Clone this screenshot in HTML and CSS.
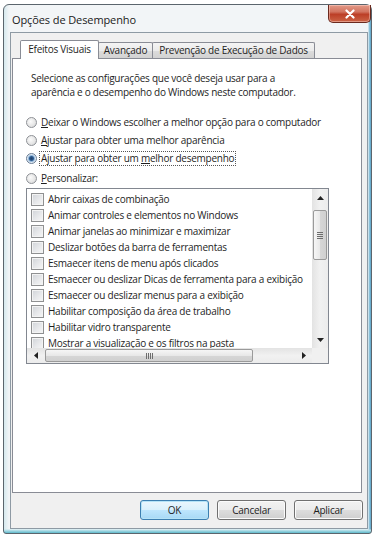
FILE: index.html
```html
<!DOCTYPE html>
<html lang="pt-BR">
<head>
<meta charset="utf-8">
<title>Opções de Desempenho</title>
<link rel="stylesheet" href="styles.css">
</head>
<body>
<div class="window">
  <div class="titlebar">
    <span class="title">Opções de Desempenho</span>
    <button class="close" aria-label="Fechar"><svg width="12" height="10" viewBox="0 0 12 10"><path d="M2.5 1.5 L9.5 8.5 M9.5 1.5 L2.5 8.5" stroke="#fff" stroke-width="2.2" stroke-linecap="round"/></svg></button>
  </div>
  <div class="client">
    <div class="tabs">
      <div class="tab tab-active tab-w1">Efeitos Visuais</div>
      <div class="tab tab-w2">Avançado</div>
      <div class="tab tab-w3">Prevenção de Execução de Dados</div>
    </div>
    <div class="panel">
      <p class="desc">Selecione as configurações que você deseja usar para a<br>aparência e o desempenho do Windows neste computador.</p>
      <div class="radios">
        <div class="radio"><span class="rb"></span><span class="lbl"><u>D</u>eixar o Windows escolher a melhor opção para o computador</span></div>
        <div class="radio"><span class="rb"></span><span class="lbl"><u>A</u>justar para obter uma melhor aparência</span></div>
        <div class="radio"><span class="rb rb-on"></span><span class="lbl lbl-focus">Ajustar para obter um <u>m</u>elhor desempenho</span></div>
        <div class="radio radio-last"><span class="rb"></span><span class="lbl"><u>P</u>ersonalizar:</span></div>
      </div>
      <div class="listbox">
        <div class="items">
          <div class="item"><span class="cb"></span>Abrir caixas de combinação</div>
          <div class="item"><span class="cb"></span>Animar controles e elementos no Windows</div>
          <div class="item"><span class="cb"></span>Animar janelas ao minimizar e maximizar</div>
          <div class="item"><span class="cb"></span>Deslizar botões da barra de ferramentas</div>
          <div class="item"><span class="cb"></span>Esmaecer itens de menu após clicados</div>
          <div class="item"><span class="cb"></span>Esmaecer ou deslizar Dicas de ferramenta para a exibição</div>
          <div class="item"><span class="cb"></span>Esmaecer ou deslizar menus para a exibição</div>
          <div class="item"><span class="cb"></span>Habilitar composição da área de trabalho</div>
          <div class="item"><span class="cb"></span>Habilitar vidro transparente</div>
          <div class="item"><span class="cb"></span>Mostrar a visualização e os filtros na pasta</div>
        </div>
        <div class="vscroll">
          <div class="sbtn"><svg width="7" height="4" viewBox="0 0 7 4"><path d="M0 4 L3.5 0 L7 4Z" fill="#222"/></svg></div>
          <div class="vthumb"><span class="grip-v"></span></div>
          <div class="sfill"></div>
          <div class="sbtn"><svg width="7" height="4" viewBox="0 0 7 4"><path d="M0 0 L3.5 4 L7 0Z" fill="#222"/></svg></div>
        </div>
        <div class="hscroll">
          <div class="sbtn"><svg width="4" height="7" viewBox="0 0 4 7"><path d="M4 0 L0 3.5 L4 7Z" fill="#222"/></svg></div>
          <div class="hthumb"><span class="grip-h"></span></div>
          <div class="sfill"></div>
          <div class="sbtn"><svg width="4" height="7" viewBox="0 0 4 7"><path d="M0 0 L4 3.5 L0 7Z" fill="#222"/></svg></div>
        </div>
        <div class="corner"></div>
      </div>
    </div>
    <div class="buttons">
      <button class="btn btn-default">OK</button>
      <button class="btn">Cancelar</button>
      <button class="btn">Aplicar</button>
    </div>
  </div>
</div>
</body>
</html>
```

FILE: styles.css
```css
html, body {
  margin: 0;
  background: #fff;
}
body {
  font-family: "Open Sans", "Noto Sans", sans-serif;
  font-size: 10px;
  letter-spacing: -0.25px;
  color: #1e1e1e;
}
.window {
  box-sizing: border-box;
  width: 369px;
  height: 530px;
  margin: 4px 0 0 3px;
  border: 1px solid #5b656d;
  border-radius: 6px 6px 3px 3px;
  padding: 0 3px 4px 6px;
  display: flex;
  flex-direction: column;
  background:
    linear-gradient(to top, #5fb9cb 0, #bfe4ec 3px, rgba(255,255,255,0) 4px),
    linear-gradient(to right, #d6e9ee 0, #f2f5f7 5px, #f2f5f7 calc(100% - 3px), #9ccbe0 calc(100% - 2px), #5aa4c8 100%);
}
.titlebar {
  height: 27px;
  display: flex;
  align-items: flex-start;
  flex: none;
}
.title {
  margin: 7px 0 0 2px;
  font-size: 11px;
  letter-spacing: -0.1px;
  line-height: 16px;
  color: #1a1a1a;
}
.close {
  margin: 0 -3px 0 auto;
  width: 43px;
  height: 18px;
  padding: 0;
  border: 1px solid #6a2a1f;
  border-top: none;
  border-radius: 0 0 5px 5px;
  background: linear-gradient(to bottom, #e39a88 0, #d27460 40%, #bc3f27 55%, #cc6446 100%);
  display: flex;
  align-items: center;
  justify-content: center;
  box-shadow: inset 0 0 0 1px rgba(255,220,210,0.45);
}
.client {
  flex: 1;
  display: flex;
  flex-direction: column;
  border: 1px solid #8e9aa4;
  background: #f0f0f0;
  padding: 7px 4px 8px 1px;
}
.tabs {
  display: flex;
  align-items: flex-end;
  height: 18px;
  padding-left: 8px;
  flex: none;
}
.tab {
  box-sizing: border-box;
  height: 16px;
  border: 1px solid #898c95;
  border-bottom: none;
  border-radius: 2px 2px 0 0;
  background: linear-gradient(to bottom, #f4f4f4 0, #ebebeb 50%, #dcdcdc 51%, #d2d2d2 100%);
  font-size: 10px;
  line-height: 14px;
  text-align: center;
  white-space: nowrap;
  margin-left: -1px;
  color: #1e1e1e;
}
.tab-active {
  height: 19px;
  margin-bottom: -1px;
  margin-left: 0;
  background: #fff;
  position: relative;
  z-index: 1;
  line-height: 17px;
}
.tab-w1 { width: 79px; }
.tab-w2 { width: 55px; }
.tab-w3 { width: 163px; }
.panel {
  flex: 1;
  background: #fff;
  border: 1px solid #898c95;
  padding: 12px 0 0 13px;
  margin-right: 1px;
}
.desc {
  margin: 0 0 0 5px;
  line-height: 14px;
}
.radios {
  margin-top: 14px;
}
.radio {
  display: flex;
  align-items: center;
  height: 18px;
  white-space: nowrap;
}
.radio-last {
  margin-top: 2px;
}
.rb {
  box-sizing: border-box;
  width: 11px;
  height: 11px;
  border-radius: 50%;
  border: 1px solid #8e9196;
  background: radial-gradient(circle at 40% 40%, #fbfbfb 0, #e6e6e6 55%, #cfd1d4 100%);
  margin-right: 4px;
  flex: none;
}
.rb-on {
  border-color: #6a7d94;
  background: radial-gradient(circle, #1f3f6a 0, #2d5b8f 2px, #8fb4d8 3px, #dce8f3 4px, #eef2f6 100%);
}
.lbl {
  line-height: 13px;
  padding: 0 1px;
  border: 1px dotted transparent;
  margin-left: -2px;
}
.lbl-focus {
  border-color: #555;
}
.listbox {
  width: 303px;
  height: 176px;
  box-sizing: border-box;
  margin-top: 1px;
  border: 1px solid #828790;
  display: grid;
  grid-template-columns: 1fr 16px;
  grid-template-rows: 1fr 15px;
  background: #fff;
}
.items {
  overflow: hidden;
  padding-top: 2px;
}
.item {
  display: flex;
  align-items: center;
  height: 16px;
  padding-left: 4px;
  white-space: nowrap;
}
.cb {
  box-sizing: border-box;
  width: 13px;
  height: 13px;
  border: 1px solid #8f9091;
  background: linear-gradient(135deg, #d0d3d8 0, #e9eaec 60%, #f6f6f6 100%);
  box-shadow: inset 0 0 0 1px #f3f3f3;
  margin-right: 4px;
  flex: none;
}
.vscroll {
  display: flex;
  flex-direction: column;
  background: linear-gradient(to right, #e3e3e3 0, #f1f1f1 50%, #ececec 100%);
}
.hscroll {
  display: flex;
  background: linear-gradient(to bottom, #e3e3e3 0, #f1f1f1 50%, #ececec 100%);
}
.corner {
  background: #f0f0f0;
}
.sbtn {
  flex: none;
  width: 16px;
  height: 17px;
  display: flex;
  align-items: center;
  justify-content: center;
}
.hscroll .sbtn {
  width: 17px;
  height: 15px;
}
.sfill {
  flex: 1;
}
.vthumb {
  box-sizing: border-box;
  margin: 4px 1px 0 1px;
  height: 50px;
  border: 1px solid #9a9a9a;
  border-radius: 2px;
  background: linear-gradient(to right, #f6f6f6 0, #e8e8e8 50%, #d6d6d6 51%, #d0d0d0 100%);
  display: flex;
  align-items: center;
  justify-content: center;
}
.hthumb {
  box-sizing: border-box;
  margin: 1px 0 1px 1px;
  width: 208px;
  border: 1px solid #9a9a9a;
  border-radius: 2px;
  background: linear-gradient(to bottom, #f6f6f6 0, #e8e8e8 50%, #d6d6d6 51%, #d0d0d0 100%);
  display: flex;
  align-items: center;
  justify-content: center;
}
.grip-v {
  width: 6px;
  height: 7px;
  background: repeating-linear-gradient(to bottom, #6d6d6d 0, #6d6d6d 1px, transparent 1px, transparent 2px);
}
.grip-h {
  width: 7px;
  height: 6px;
  background: repeating-linear-gradient(to right, #6d6d6d 0, #6d6d6d 1px, transparent 1px, transparent 2px);
}
.buttons {
  display: flex;
  justify-content: flex-end;
  gap: 8px;
  margin-top: 7px;
  flex: none;
}
.btn {
  box-sizing: border-box;
  width: 69px;
  height: 20px;
  padding: 0;
  border: 1px solid #707070;
  border-radius: 3px;
  background: linear-gradient(to bottom, #f2f2f2 0, #ebebeb 50%, #dddddd 51%, #cfcfcf 100%);
  box-shadow: inset 0 0 0 1px #fbfbfb;
  font-family: "Open Sans", "Noto Sans", sans-serif;
  font-size: 10px;
  letter-spacing: -0.25px;
  color: #1e1e1e;
}
.btn-default {
  border-color: #3c7fb1;
  box-shadow: inset 0 0 0 1px #b5e3f7;
  background: linear-gradient(to bottom, #eaf6fd 0, #d9f0fc 50%, #bee6fd 51%, #a7d9f5 100%);
}
```
